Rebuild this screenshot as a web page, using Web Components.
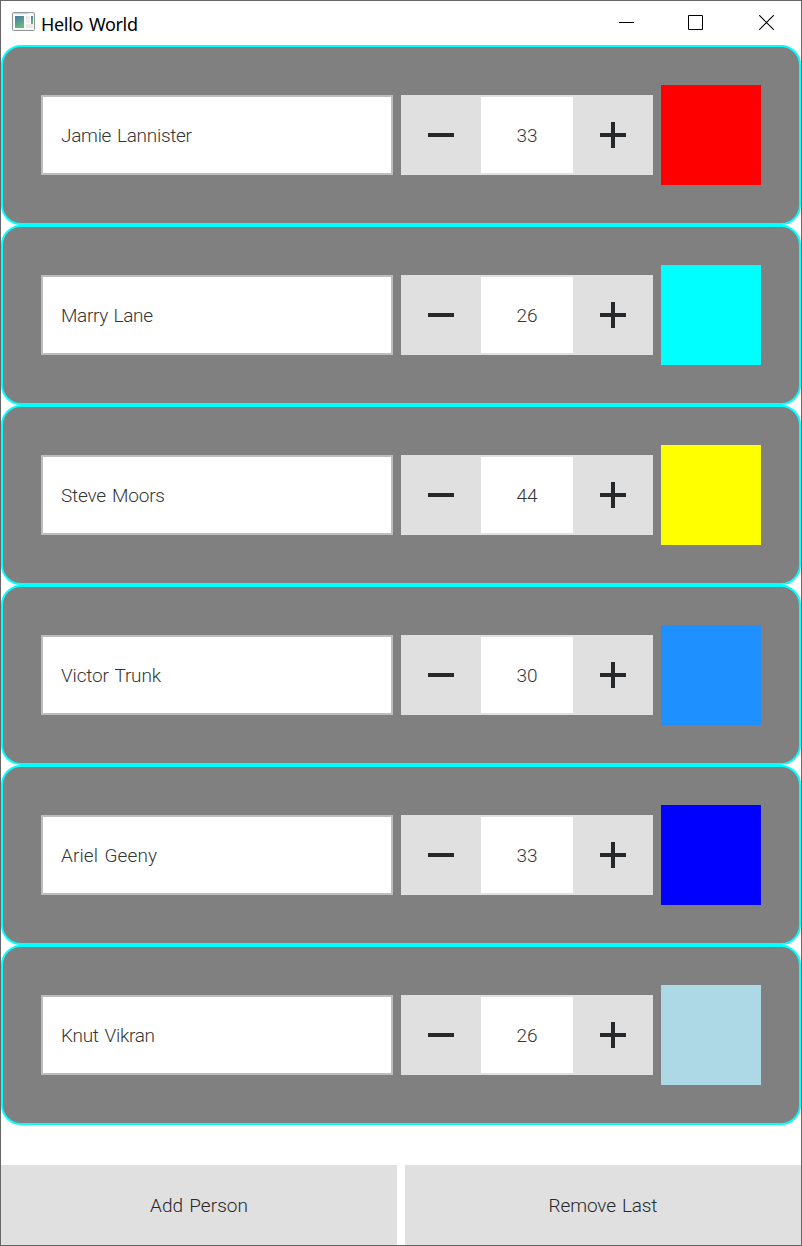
<!DOCTYPE html>
<html lang="en">
<head>
<meta charset="utf-8">
<title>Hello World</title>
<style>
html,body{margin:0;height:100%;background:#fff}
body{font-family:Roboto,"Liberation Sans",sans-serif;font-weight:300;font-size:19px;color:#26282a;overflow:hidden}
</style>
</head>
<body>
<app-window></app-window>
<script>
function define(name, markup, setup) {
  const template = document.createElement('template');
  template.innerHTML = markup;
  customElements.define(name, class extends HTMLElement {
    connectedCallback() {
      if (this.shadowRoot) return;
      this.attachShadow({ mode: 'open' }).append(template.content.cloneNode(true));
      if (setup) setup(this, this.shadowRoot);
    }
  });
}

// A single line of text whose letter spacing is tuned to a given advance width.
define('fit-text', `
<style>:host{display:inline-block;white-space:nowrap;line-height:24px;padding-top:2px;word-spacing:1.5px}</style><slot></slot>`,
(host) => {
  const wanted = Number(host.getAttribute('width'));
  const natural = host.getBoundingClientRect().width;
  const count = host.textContent.length;
  if (wanted && natural) {
    const spacing = (wanted - natural) / (count - 1);
    host.style.letterSpacing = spacing + 'px';
    host.style.marginRight = -spacing + 'px';
  }
});

define('title-bar', `
<style>
:host{display:flex;height:44px;background:#fff;color:#000;font:400 18px "Noto Sans","Open Sans",sans-serif}
.icon{margin:11px 6px 0 11px;width:23px;height:19px;flex:none}
fit-text{margin-top:9px}
.controls{margin:14px 27px 0 auto;display:flex;gap:54px}
svg{display:block}
.controls svg:last-child{margin-left:2px}
</style>
<svg class="icon" viewBox="0 0 23 19">
<defs><linearGradient id="g" x1="0" y1="0" x2=".4" y2="1"><stop offset="0" stop-color="#4778a8"/><stop offset="1" stop-color="#69b77b"/></linearGradient></defs>
<rect x=".5" y=".5" width="22" height="18" rx="1" fill="#f3f3f3" stroke="#92979b"/>
<path d="M1 1.5h21" stroke="#d2d5dc"/><path d="M16 1.5h5" stroke="#f7f7f7"/>
<rect x="2" y="3" width="19" height="14" fill="#fff"/>
<rect x="3" y="4" width="9" height="12" fill="url(#g)"/>
<rect x="14" y="4" width="4" height="7" fill="#eceeec"/><rect x="14" y="12" width="7" height="4" fill="#e9e9e9"/>
<rect x="19" y="4" width="2" height="8" fill="url(#g)"/>
</svg>
<fit-text width="97">Hello World</fit-text>
<div class="controls">
<svg width="15" height="15"><path d="M0 7.5h15" stroke="#000"/></svg>
<svg width="15" height="15"><path d="M.5.5h14v14H.5z" fill="none" stroke="#000"/></svg>
<svg width="15" height="15"><path d="M.2.2l14.6 14.6M14.8.2L.2 14.8" stroke="#000" stroke-width="1.1"/></svg>
</div>`);

define('text-field', `
<style>:host{display:flex;align-items:center;box-sizing:border-box;width:352px;height:80px;padding-left:18px;background:#fff;border:2px solid #bdbdbd;color:#353637}</style><slot></slot>`);

define('spin-box', `
<style>
:host{display:grid;grid-template-columns:80px 92px 80px;height:80px;background:#e0e0e0;color:#353637}
div{display:flex;align-items:center;justify-content:center}
.value{margin:2px 0;background:#fff}
path{fill:#26282a}
</style>
<div><svg width="26" height="26"><path d="M0 11h26v4H0z"/></svg></div>
<div class="value"><slot></slot></div>
<div><svg width="26" height="26"><path d="M0 11h26v4H0zM11 0h4v26h-4z"/></svg></div>`);

define('color-swatch', `<style>:host{display:block;width:100px;height:100px}</style>`);

define('person-card', `
<style>:host{display:flex;align-items:center;gap:8px;box-sizing:border-box;height:180px;padding:0 38px;background:#808080;border:2px solid #0ff;border-radius:20px}</style>
<text-field></text-field><spin-box></spin-box><color-swatch></color-swatch>`,
(host, root) => {
  root.querySelector('text-field').innerHTML = `<fit-text width="${host.getAttribute('w')}">${host.getAttribute('name')}</fit-text>`;
  root.querySelector('spin-box').innerHTML = `<fit-text width="21">${host.getAttribute('age')}</fit-text>`;
  root.querySelector('color-swatch').style.background = host.getAttribute('color');
});

define('push-button', `
<style>:host{display:flex;align-items:center;justify-content:center;flex:1;height:80px;background:#e0e0e0}</style><slot></slot>`);

define('app-window', `
<style>
:host{display:flex;flex-direction:column;box-sizing:border-box;width:802px;height:1246px;border:1px solid #666;background:#fff}
footer{display:flex;gap:8px;margin-top:auto}
</style>
<title-bar></title-bar>
<main>
<person-card name="Jamie Lannister" w="131" age="33" color="#ff0000"></person-card>
<person-card name="Marry Lane" w="92" age="26" color="#00ffff"></person-card>
<person-card name="Steve Moors" w="104" age="44" color="#ffff00"></person-card>
<person-card name="Victor Trunk" w="100" age="30" color="#1e90ff"></person-card>
<person-card name="Ariel Geeny" w="96" age="33" color="#0000ff"></person-card>
<person-card name="Knut Vikran" w="94" age="26" color="#add8e6"></person-card>
</main>
<footer><push-button><fit-text width="98">Add Person</fit-text></push-button><push-button><fit-text width="109">Remove Last</fit-text></push-button></footer>`);
</script>
</body>
</html>
